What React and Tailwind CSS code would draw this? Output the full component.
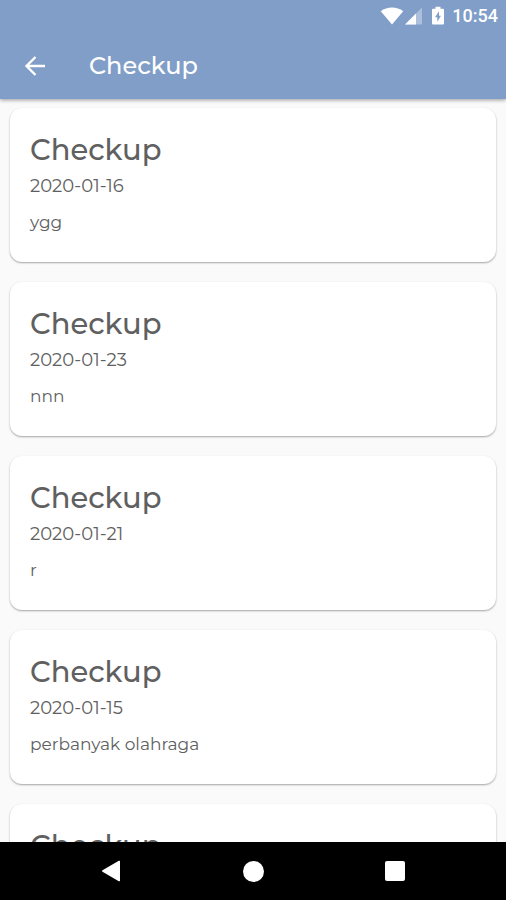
import React from "react";

const checkups = [
  { id: 1, date: "2020-01-16", note: "ygg" },
  { id: 2, date: "2020-01-23", note: "nnn" },
  { id: 3, date: "2020-01-21", note: "r" },
  { id: 4, date: "2020-01-15", note: "perbanyak olahraga" },
  { id: 5 },
];

function StatusBar() {
  return (
    <div className="flex h-8 items-center justify-end pr-2 text-white">
      <svg className="h-5 w-6" viewBox="0 0 24 20" fill="currentColor" aria-hidden="true">
        <path d="M.8 5.200C7.200.2 16.800.2 23.200 5.200L12 18.500Z" />
      </svg>
      <svg className="h-5 w-5" viewBox="0 0 20 20" fill="currentColor" aria-hidden="true">
        <path d="M1 18.500L18 1.500V18.500Z" opacity="0.35" />
        <path d="M1 18.500L12 7.500V18.500Z" />
      </svg>
      <svg className="ml-1.5 h-5 w-4" viewBox="0 0 16 20" aria-hidden="true">
        <path
          fill="currentColor"
          fillRule="evenodd"
          d="M5.500.8h5v1.900h2.500a1 1 0 0 1 1 1V17.500a1 1 0 0 1-1 1h-10a1 1 0 0 1-1-1V3.700a1 1 0 0 1 1-1H5.500ZM9 5.200 5 11.200H7.300V15.800L11 9.800H9Z"
        />
      </svg>
      <span className="ml-1.5 font-[Roboto,sans-serif] text-lg font-medium">10:54</span>
    </div>
  );
}

function CheckupCard({ date, note }) {
  return (
    <article className="h-[154px] shrink-0 rounded-xl bg-white px-5 pt-6 text-[#606060] shadow-[0_1px_2px_rgba(0,0,0,0.35)]">
      <h2 className="text-[29px] leading-9 font-medium">Checkup</h2>
      {date && <p className="mt-1.5 text-lg leading-6">{date}</p>}
      {note && <p className="mt-3 text-[17px] leading-6">{note}</p>}
    </article>
  );
}

export default function App() {
  return (
    <div className="flex h-screen flex-col overflow-hidden bg-[#fafafa] font-[Montserrat,Inter,sans-serif]">
      <header className="z-10 shrink-0 bg-[#809ec8] text-white shadow-[0_1px_4px_rgba(0,0,0,0.4)]">
        <StatusBar />
        <div className="flex h-[67px] items-center pl-[19px]">
          <button type="button" aria-label="Back" className="flex size-8 items-center justify-center">
            <svg className="h-6 w-6" viewBox="0 0 24 24" fill="none" stroke="currentColor" strokeWidth="2.4" aria-hidden="true">
              <path d="M22 12H4M12.500 3L3.500 12L12.500 21" />
            </svg>
          </button>
          <h1 className="ml-[38px] text-2xl font-medium">Checkup</h1>
        </div>
      </header>
      <main className="flex min-h-0 flex-1 flex-col gap-5 overflow-hidden px-[10px] pt-[9px]">
        {checkups.map((item) => (
          <CheckupCard key={item.id} date={item.date} note={item.note} />
        ))}
      </main>
      <nav className="z-10 flex h-[58px] shrink-0 items-center justify-center gap-[94px] bg-black text-white">
        <button type="button" aria-label="Back" className="flex size-12 items-center justify-center">
          <svg className="size-6" viewBox="0 0 24 24" fill="currentColor" aria-hidden="true">
            <path d="M21 2.500V21.500a.8.8 0 0 1-1.200.7L3.500 12.700a.8.8 0 0 1 0-1.400L19.800 1.800a.8.8 0 0 1 1.200.7Z" />
          </svg>
        </button>
        <button type="button" aria-label="Home" className="flex size-12 items-center justify-center">
          <span className="size-[21px] rounded-full bg-white" />
        </button>
        <button type="button" aria-label="Recent apps" className="flex size-12 items-center justify-center">
          <span className="size-5 rounded-[2px] bg-white" />
        </button>
      </nav>
    </div>
  );
}
